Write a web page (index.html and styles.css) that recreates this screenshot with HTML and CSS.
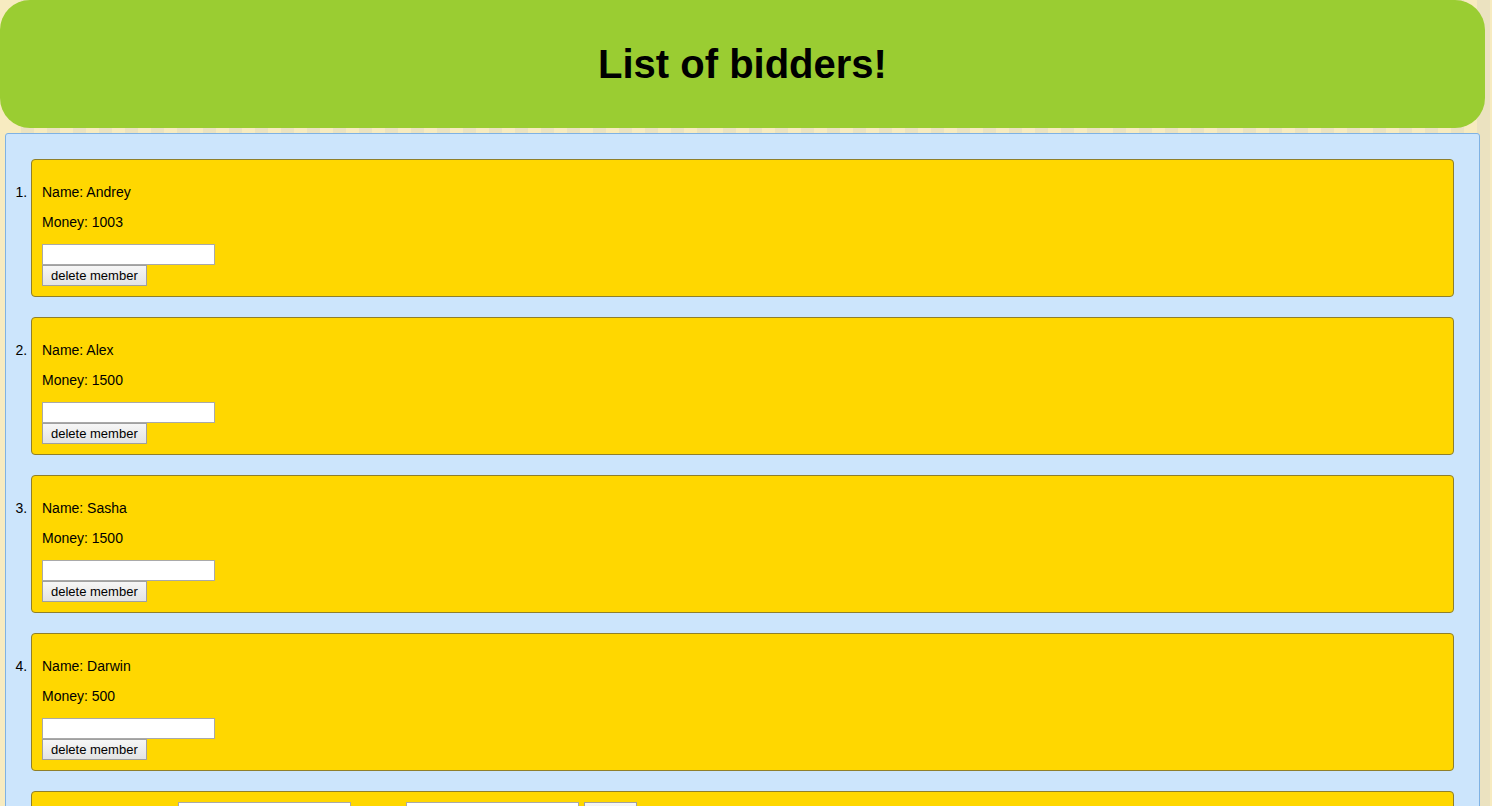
FILE: index.html
```html
<!DOCTYPE html>
<html>
<head>
<meta charset="utf-8">
<title>List of bidders</title>
<link rel="stylesheet" href="styles.css">
</head>
<body>
<div class="page">
  <header class="header">
    <h1 class="title">List of bidders!</h1>
  </header>
  <main class="board">
    <ol class="bidders">
      <li class="card">
        <p class="line">Name: Andrey</p>
        <p class="line">Money: 1003</p>
        <input class="field" type="text"><br>
        <button class="btn">delete member</button>
      </li>
      <li class="card">
        <p class="line">Name: Alex</p>
        <p class="line">Money: 1500</p>
        <input class="field" type="text"><br>
        <button class="btn">delete member</button>
      </li>
      <li class="card">
        <p class="line">Name: Sasha</p>
        <p class="line">Money: 1500</p>
        <input class="field" type="text"><br>
        <button class="btn">delete member</button>
      </li>
      <li class="card">
        <p class="line">Name: Darwin</p>
        <p class="line">Money: 500</p>
        <input class="field" type="text"><br>
        <button class="btn">delete member</button>
      </li>
    </ol>
    <div class="card addcard">
      <span class="label label-name">Name new member:</span>
      <input class="field" type="text">
      <span class="label label-money">Money:</span>
      <input class="field" type="text">
      <button class="btn addbtn">add</button>
    </div>
  </main>
</div>
</body>
</html>
```

FILE: styles.css
```css
html, body {
  margin: 0;
  padding: 0;
}
body {
  font-family: "Liberation Sans", Arial, sans-serif;
  font-size: 14px;
  color: #000;
  background: repeating-linear-gradient(90deg, #f7ebc0 0 13px, #ebe2c0 13px 26px);
  background-position: 8px 0;
}
.page {
  width: 1485px;
}
.header {
  background: #9acd32;
  border-radius: 30px;
  height: 128px;
  display: flex;
  align-items: center;
  justify-content: center;
}
.title {
  margin: 0;
  font-size: 40px;
  font-weight: bold;
  line-height: 46px;
  padding-bottom: 1px;
}
.board {
  margin: 5px 5px 0 5px;
  background: #cce5fc;
  border: 1px solid #7fb2e3;
  border-radius: 3px;
  padding: 25px 25px 40px 25px;
}
.bidders {
  margin: 0;
  padding: 0;
  list-style-position: outside;
}
.card {
  background: #ffd700;
  border: 1px solid #8f7f2a;
  border-radius: 4px;
  padding: 10px;
  margin-bottom: 20px;
}
.line {
  margin: 14px 0;
  line-height: 16px;
}
.field {
  box-sizing: border-box;
  width: 173px;
  height: 21px;
  margin: 0;
  border: 1px solid #a9a9a9;
  background: #fff;
  padding: 1px 2px;
  font-family: "Liberation Sans", Arial, sans-serif;
  font-size: 13px;
  vertical-align: top;
}
.btn {
  box-sizing: border-box;
  height: 21px;
  margin: 0;
  padding: 0 8px;
  border: 1px solid #a0a0a0;
  background: linear-gradient(#f6f6f6, #e3e3e3);
  font-family: "Liberation Sans", Arial, sans-serif;
  font-size: 13px;
  color: #000;
  line-height: 18px;
  vertical-align: top;
}
.addcard {
  display: flex;
  align-items: flex-start;
  gap: 5px;
  height: 60px;
}
.label {
  line-height: 21px;
}
.label-name {
  width: 131px;
}
.label-money {
  width: 45px;
}
.addbtn {
  width: 53px;
  padding: 0;
}
```
